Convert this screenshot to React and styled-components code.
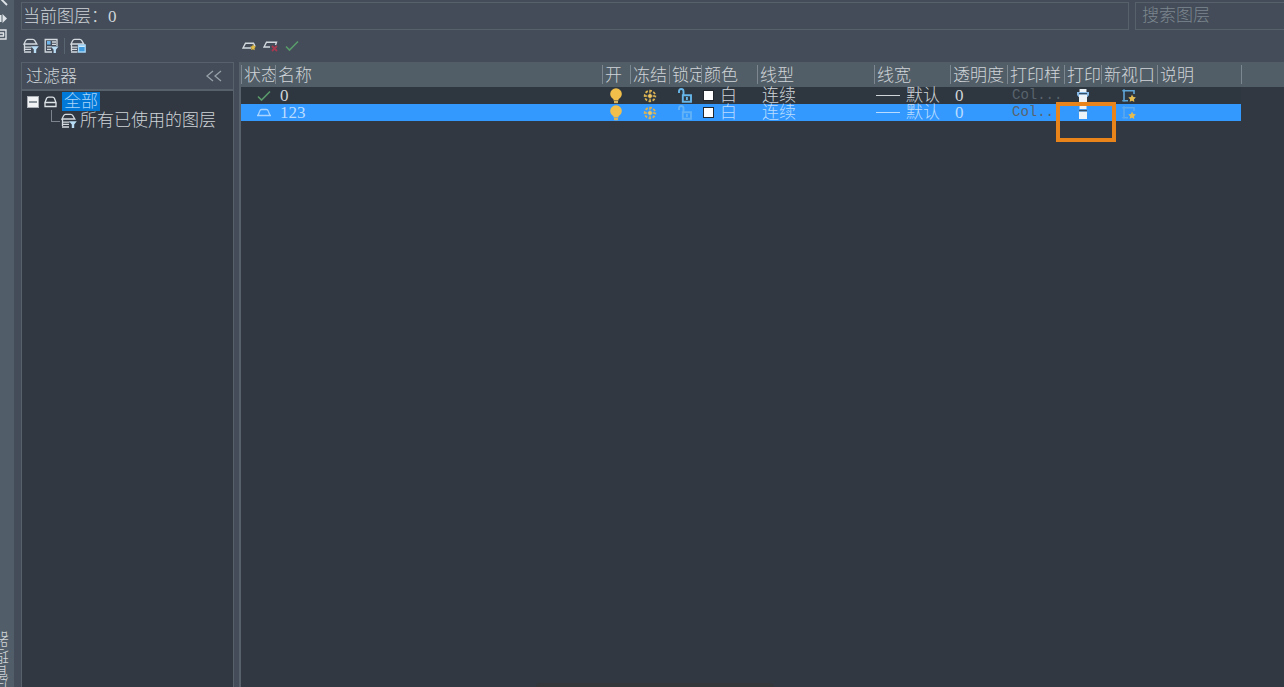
import React from 'react'
import styled, { createGlobalStyle } from 'styled-components';

const columns = [
  { name: '状态', width: 34 },
  { name: '名称', width: 327 },
  { name: '开', width: 28 },
  { name: '冻结', width: 39 },
  { name: '锁定', width: 32 },
  { name: '颜色', width: 56 },
  { name: '线型', width: 117 },
  { name: '线宽', width: 76 },
  { name: '透明度', width: 57 },
  { name: '打印样', width: 57 },
  { name: '打印', width: 37 },
  { name: '新视口', width: 56 },
  { name: '说明', width: 84 },
];

const layers = [
  { name: '0', current: true },
  { name: '123', selected: true },
];

const LayerIcon = () => (
  <svg width="13" height="12" viewBox="0 0 13 12" fill="none" stroke="#dfe4e8" strokeWidth="1.3">
    <path d="M1 6.5 2.5 2.5Q3 1.2 4.5 1.2h4q1.5 0 2 1.3L12 6.5zM1 6.5v4h11v-4" />
  </svg>
);

const FilterIcon = () => (
  <svg width="16" height="16" viewBox="0 0 16 16" fill="none" stroke="#d3d9de" strokeWidth="1.3">
    <path d="M1 6 2.6 2.7Q3.2 1.4 4.6 1.4h5.2q1.4 0 2 1.3L13.8 6zM1.5 6v3M1 9.2h7.5M1.5 9v4M1 11.4h7M1 14h7" />
    <path d="M8 8.2h7.8L13.2 11.6V15H10.8v-3.4z" fill="#b9dcf5" stroke="none" />
  </svg>
);

const GroupFilterIcon = () => (
  <svg width="15" height="16" viewBox="0 0 15 16" fill="none" stroke="#d3d9de" strokeWidth="1.3">
    <path d="M13 8V1.5H1.2V14H8" />
    <path d="M3 3h3.6v3.6H3z" fill="#6fb4e8" stroke="none" />
    <path d="M8 4h4M8 6.4h4M3 8.8h4.5M3 11.4h4" />
    <path d="M7 8.5h7.5L11.9 11.8V15H9.6v-3.2z" fill="#b9dcf5" stroke="none" />
  </svg>
);

const StateIcon = () => (
  <svg width="16" height="16" viewBox="0 0 16 16" fill="none" stroke="#d3d9de" strokeWidth="1.3">
    <path d="M1 6 2.6 2.7Q3.2 1.4 4.6 1.4h5.2q1.4 0 2 1.3L13.8 6zM1.5 6v3M1 9.2h6.5M1.5 9v4M1 11.4h6M1 14h6.5" />
    <path d="M8.5 7h6.7v7H8.5z" fill="#3f9ade" stroke="#a9d6f5" strokeWidth="1.3" />
    <path d="M9 8.3h5.8" stroke="#d9effd" />
  </svg>
);

const NewLayerIcon = () => (
  <svg width="15" height="12" viewBox="0 0 15 12" fill="none" stroke="#d3d9de" strokeWidth="1.4">
    <path d="M9 8H1L3.5 3.2h8L13 6" />
    <path d="m11 4 1 2 2 .6-1.5 1.4.2 2.2-1.8-1-1.8.8.4-2-1.2-1.4 2-.4z" fill="#e3bd45" stroke="none" />
  </svg>
);

const DeleteLayerIcon = () => (
  <svg width="16" height="12" viewBox="0 0 16 12" fill="none" stroke="#d3d9de" strokeWidth="1.4">
    <path d="M7 7H1L3.5 2.2h10L12.5 5" />
    <path d="m9 6 5 5M14 6l-5 5" stroke="#a8384f" strokeWidth="1.8" />
  </svg>
);

const CheckIcon = () => (
  <svg width="14" height="12" viewBox="0 0 14 12" fill="none" stroke="#5a9a6b" strokeWidth="1.6">
    <path d="M1 6.5 4.5 10 13 1.5" />
  </svg>
);

const SheetIcon = () => (
  <svg width="14" height="9" viewBox="0 0 14 9" fill="none" stroke="#a8d4ff" strokeWidth="1.3">
    <path d="M0 7.5h14M1.2 7 2.6 3.4Q3.2 1.5 4.7 1.5h4.6q1.5 0 2.1 1.9L12.8 7" />
  </svg>
);

const BulbIcon = () => (
  <svg width="12" height="16" viewBox="0 0 12 16">
    <circle cx="6" cy="6" r="5.8" fill="#f2bf4b" />
    <path d="M3.5 10h5v2.5h-5z" fill="#f2bf4b" />
    <path d="M4 13h4v2.2H4z" fill="#d8b35c" />
  </svg>
);

const SunIcon = () => (
  <svg width="14" height="14" viewBox="0 0 14 14" fill="none" stroke="#dcb353" strokeWidth="1.8">
    <circle cx="7" cy="7" r="5.3" strokeDasharray="2.6 1.56" strokeDashoffset="1.3" />
    <path d="M7 2v2.4M7 9.6V12M2 7h2.4M9.6 7H12" strokeWidth="1.3" />
    <circle cx="7" cy="7" r="2" fill="#f0c65e" stroke="none" />
  </svg>
);

const LockIcon = ({ dim }) => (
  <svg width="14" height="15" viewBox="0 0 14 15" fill="none" stroke={dim ? '#62b2f7' : '#67b7ea'} strokeWidth="1.9">
    <path d="M1 5V3.2Q1 1 3.2 1T5.5 3.2V7" />
    <path d="M4.8 7.2h8.2v6.6H4.8z" />
    <path d="M8.9 9v3" />
  </svg>
);

const PrinterIcon = ({ dim }) => (
  <svg width="12" height="13" viewBox="0 0 12 13">
    <path d="M2.5 0h7v3h-7z" fill="#eef3f8" />
    <path d="M0 3h12v3l-1.5 2h-9L0 6z" fill={dim ? '#3f9cf5' : '#86b9e6'} />
    <path d="M2 5.5h8V13H2z" fill="#eef3f8" />
    <path d="M2 4h8v1.3H2z" fill="#33506b" />
  </svg>
);

const ViewportIcon = ({ dim }) => (
  <svg width="14" height="14" viewBox="0 0 14 14" fill="none" stroke={dim ? '#5ba9ee' : '#5fa6d8'} strokeWidth="1.6">
    <path d="M12 5V1.8H2v10h4" />
    <path d="M0 1.8h3M2 0v3M0 11.8h3" strokeWidth="1" />
    <path d="m10 5.6 1.1 2.2 2.8.6-1.9 1.8.3 2.8-2.3-1.3-2.3 1.1.4-2.6-1.8-1.8 2.6-.4z" fill="#e3bb50" stroke="none" />
  </svg>
);

const CloseIcon = () => (
  <svg width="8" height="9" viewBox="0 0 8 9" stroke="#dfe4e8" strokeWidth="1.8">
    <path d="M0-2l7 7" />
  </svg>
);

const DockIcon = () => (
  <svg width="8" height="10" viewBox="0 0 8 10" fill="#dfe4e8">
    <path d="M0 1h1.5v7H0zM2.5 0l4.5 4.5-4.5 4.5z" />
  </svg>
);

const MenuIcon = () => (
  <svg width="8" height="12" viewBox="0 0 8 12" fill="none" stroke="#dfe4e8" strokeWidth="1.4">
    <path d="M0 1h6v9H0M0 4h4M0 7h4M3.5 4v3" />
  </svg>
);

export default class App extends React.Component {

  renderRow(layer) {
    const dim = layer.selected;
    return (
      <LayerRow key={layer.name} $selected={layer.selected}>
        <StatusCell>{layer.current ? <CheckIcon /> : <SheetIcon />}</StatusCell>
        <Cell>{layer.name}</Cell>
        <IconCell><BulbIcon /></IconCell>
        <IconCell><SunIcon /></IconCell>
        <IconCell><LockIcon dim={dim} /></IconCell>
        <Cell $tight><Inline><Swatch />白</Inline></Cell>
        <Cell>连续</Cell>
        <Cell $tight><Inline><WeightLine />默认</Inline></Cell>
        <Cell>0</Cell>
        <Cell><PlotStyle>Col...</PlotStyle></Cell>
        <IconCell>
          <PrinterIcon dim={dim} />
          {layer.selected && <Marker />}
        </IconCell>
        <IconCell><ViewportIcon dim={dim} /></IconCell>
        <Cell />
        <EmptyCell />
      </LayerRow>
    );
  }

  render() {
    return (
      <Palette>
        <GlobalStyle />
        <TitleStrip>
          <StripButtons>
            <StripButton aria-label="关闭"><CloseIcon /></StripButton>
            <StripButton aria-label="自动隐藏"><DockIcon /></StripButton>
            <StripButton aria-label="特性"><MenuIcon /></StripButton>
          </StripButtons>
          <StripTitle>性管理器</StripTitle>
        </TitleStrip>

        <Main>
          <TopBar>
            <CurrentLayer>当前图层：0</CurrentLayer>
            <SearchBox type="text" aria-label="搜索图层" placeholder="搜索图层" />
          </TopBar>

          <Toolbar>
            <FilterTools>
              <ToolButton aria-label="新建特性过滤器"><FilterIcon /></ToolButton>
              <ToolButton aria-label="新建组过滤器"><GroupFilterIcon /></ToolButton>
              <Divider />
              <ToolButton aria-label="图层状态管理器"><StateIcon /></ToolButton>
            </FilterTools>
            <LayerTools>
              <ToolButton aria-label="新建图层"><NewLayerIcon /></ToolButton>
              <ToolButton aria-label="删除图层"><DeleteLayerIcon /></ToolButton>
              <ToolButton aria-label="置为当前"><CheckIcon /></ToolButton>
            </LayerTools>
          </Toolbar>

          <Panels>
            <FilterPanel>
              <FilterHeader>
                <span>过滤器</span>
                <ToolButton aria-label="收拢过滤器">
                  <svg width="18" height="12" viewBox="0 0 18 12" fill="none" stroke="#97a1aa" strokeWidth="1.3">
                    <path d="M8 1 2 6l6 5M16 1l-6 5 6 5" />
                  </svg>
                </ToolButton>
              </FilterHeader>
              <Tree>
                <TreeItem>
                  <Collapse aria-label="收起" />
                  <LayerIcon />
                  <TreeLabel $selected>全部</TreeLabel>
                </TreeItem>
                <TreeItem $child>
                  <Branch />
                  <FilterIcon />
                  <TreeLabel>所有已使用的图层</TreeLabel>
                </TreeItem>
              </Tree>
            </FilterPanel>

            <LayerPanel>
              <LayerTable>
                <colgroup>
                  {columns.map(c => <Col key={c.name} $width={c.width} />)}
                  <col />
                </colgroup>
                <thead>
                  <tr>
                    {columns.map(c => <HeadCell key={c.name}>{c.name}</HeadCell>)}
                    <HeadCell as="td" />
                  </tr>
                </thead>
                <tbody>
                  {layers.map(layer => this.renderRow(layer))}
                </tbody>
              </LayerTable>
            </LayerPanel>
          </Panels>
        </Main>
        <BottomTab />
      </Palette>
    )
  }
}

const GlobalStyle = createGlobalStyle`
  * {
    box-sizing: border-box;
  }

  body {
    margin: 0;
    background-color: #434c58;
    color: #cfd4d8;
    font-family: "Liberation Serif", "Noto Sans CJK SC", serif;
    font-size: 17px;
    font-weight: 300;
    line-height: 17px;
  }

  svg {
    display: block;
    flex: none;
  }
`;

const Palette = styled.div`
  position: relative;
  display: flex;
  height: 100vh;
  overflow: hidden;
`;

const TitleStrip = styled.aside`
  display: flex;
  flex-direction: column;
  justify-content: space-between;
  flex: none;
  width: 14px;
  overflow: hidden;
  background-color: #515e69;
`;

const StripButtons = styled.div`
  display: flex;
  flex-direction: column;
  gap: 5px;
`;

const StripButton = styled.button`
  padding: 0;
  border: none;
  background: none;
`;

const StripTitle = styled.span`
  margin: 0 0 -12px -6px;
  writing-mode: vertical-rl;
  transform: rotate(180deg);
`;

const Main = styled.main`
  display: flex;
  flex-direction: column;
  flex: 1;
  min-width: 0;
  padding: 2px 0 0 7px;
`;

const TopBar = styled.div`
  display: flex;
  gap: 6px;
  height: 28px;
`;

const CurrentLayer = styled.div`
  display: flex;
  align-items: center;
  flex: 1;
  padding-left: 1px;
  border: 1px solid #56616c;
`;

const SearchBox = styled.input`
  width: 149px;
  padding: 0 6px;
  border: 1px solid #56616c;
  border-right: none;
  background: none;
  color: #cfd4d8;
  font: inherit;
  outline: none;

  &::placeholder {
    color: #7c868f;
    opacity: 1;
  }
`;

const Toolbar = styled.div`
  display: flex;
  align-items: center;
  height: 32px;
`;

const FilterTools = styled.div`
  display: flex;
  align-items: center;
  gap: 5px;
  width: 221px;
  padding-left: 2px;
`;

const LayerTools = styled.div`
  display: flex;
  align-items: center;
  gap: 6px;
`;

const ToolButton = styled.button`
  padding: 0;
  border: none;
  background: none;
`;

const Divider = styled.span`
  width: 1px;
  height: 16px;
  background-color: #596570;
`;

const Panels = styled.div`
  display: flex;
  flex: 1;
  gap: 5px;
  min-height: 0;
`;

const FilterPanel = styled.section`
  flex: none;
  width: 213px;
  border: 1px solid #56616c;
  border-bottom: none;
  background-color: #313842;
`;

const FilterHeader = styled.header`
  display: flex;
  justify-content: space-between;
  align-items: center;
  height: 28px;
  padding: 0 10px 0 4px;
  border-bottom: 2px solid #56616c;
  background-color: #434c58;
`;

const Tree = styled.ul`
  margin: 0;
  padding: 1px 0 0 5px;
  list-style: none;
`;

const TreeItem = styled.li`
  display: flex;
  align-items: center;
  gap: ${props => props.$child ? '1px' : '5px'};
  height: 19px;
  padding-left: ${props => props.$child ? '24px' : '0'};
`;

const Collapse = styled.button`
  width: 12px;
  height: 12px;
  padding: 0;
  border: 1px solid #aab0b6;
  background: linear-gradient(#8d959d, #8d959d) center / 8px 2px no-repeat #f2f3f4;
`;

const Branch = styled.span`
  width: 9px;
  height: 12px;
  margin-bottom: 10px;
  border: 1px solid #7b848c;
  border-width: 0 0 1px 1px;
`;

const TreeLabel = styled.span`
  padding: 0 2px;
  line-height: 19px;
  color: ${props => props.$selected ? '#a9d4f7' : '#cfd4d8'};
  background-color: ${props => props.$selected ? '#0078d7' : 'transparent'};
`;

const LayerPanel = styled.section`
  flex: 1;
  min-width: 0;
  border-left: 2px solid #56616c;
  background-color: #313842;
`;

const LayerTable = styled.table`
  width: 100%;
  table-layout: fixed;
  border-collapse: collapse;
`;

const Col = styled.col`
  width: ${props => props.$width}px;
`;

const HeadCell = styled.th`
  height: 25px;
  padding: 2px 0 0 3px;
  overflow: hidden;
  background: linear-gradient(#7d878f, #7d878f) left center / 1px 19px no-repeat #525e67;
  font-weight: 300;
  text-align: left;
  white-space: nowrap;
`;

const LayerRow = styled.tr`
  height: 17px;
  background-color: ${props => props.$selected ? '#3399ff' : '#2e363f'};
  color: ${props => props.$selected ? '#b9dcff' : '#cfd4d8'};
  line-height: 15px;
`;

const Cell = styled.td`
  position: relative;
  height: 17px;
  padding: 0 0 0 ${props => props.$tight ? '2px' : '5px'};
  white-space: nowrap;
`;

const IconCell = styled(Cell)`
  padding: 0;

  & > svg {
    margin: 0 auto;
  }
`;

const StatusCell = styled(Cell)`
  padding-left: 16px;
`;

const EmptyCell = styled.td`
  padding: 0;
  background-color: #313842;
`;

const Inline = styled.span`
  display: flex;
  align-items: center;
  gap: 6px;
`;

const Swatch = styled.span`
  width: 11px;
  height: 11px;
  border: 1px solid #22272d;
  background-color: white;
`;

const WeightLine = styled.span`
  width: 24px;
  height: 1px;
  background-color: currentColor;
`;

const PlotStyle = styled.span`
  display: block;
  color: #59636d;
  font-family: "Liberation Mono", monospace;
  font-size: 14px;
`;

const Marker = styled.span`
  position: absolute;
  z-index: 1;
  top: -2px;
  left: -8px;
  width: 60px;
  height: 40px;
  border: 4px solid #e8841a;
`;

const BottomTab = styled.div`
  position: absolute;
  bottom: 0;
  left: 50%;
  width: 238px;
  height: 4px;
  margin-left: -106px;
  border-radius: 4px 4px 0 0;
  background-color: #33373a;
`;
